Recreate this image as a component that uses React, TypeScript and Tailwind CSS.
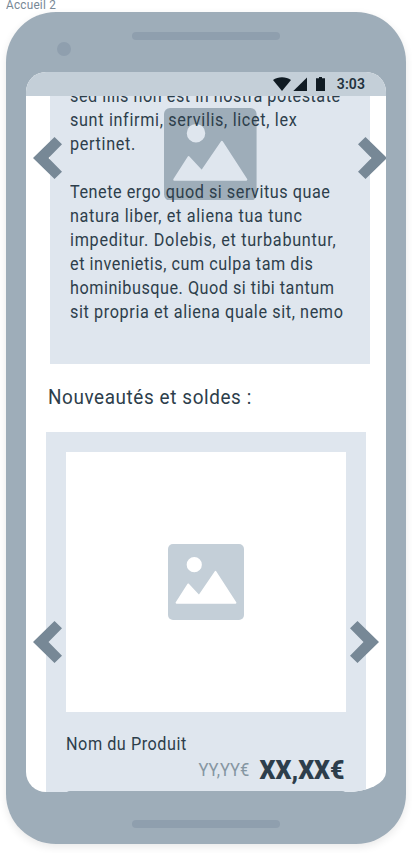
import clsx from 'clsx';

const lines = [
  { text: 'sed illis non est in nostra potestate', tracking: 'tracking-[0.59px]' },
  { text: 'sunt infirmi, servilis, licet, lex', tracking: 'tracking-[0.74px]' },
  { text: 'pertinet.', tracking: 'tracking-[0.75px]' },
  { text: '\u00a0', tracking: 'tracking-normal' },
  { text: 'Tenete ergo quod si servitus quae', tracking: 'tracking-[0.6px]' },
  { text: 'natura liber, et aliena tua tunc', tracking: 'tracking-[0.75px]' },
  { text: 'impeditur. Dolebis, et turbabuntur,', tracking: 'tracking-[0.79px]' },
  { text: 'et invenietis, cum culpa tam dis', tracking: 'tracking-[0.6px]' },
  { text: 'hominibusque. Quod si tibi tantum', tracking: 'tracking-[0.58px]' },
  { text: 'sit propria et aliena quale sit, nemo', tracking: 'tracking-[0.68px]' },
];

function Picture({ className }: { className: string }) {
  return (
    <svg viewBox="0 0 92 92" className={className}>
      <rect width="92" height="92" rx="6" fill="currentColor" />
      <g className="fill-(--cutout) stroke-(--cutout)" strokeLinejoin="round" strokeWidth="2">
        <circle cx="31.8" cy="25" r="8.2" />
        <path d="M10.2 71.2 24.5 48.8 37.5 62.8 57.5 33.5 81.8 71.2Z" />
      </g>
    </svg>
  );
}

function Chevron({ className, flip }: { className: string; flip?: boolean }) {
  return (
    <button className={clsx('absolute h-[42px] w-[29px] text-[#778896]', className)}>
      <svg viewBox="0 0 29 42" className={clsx('block h-full w-full', flip && '-scale-x-100')}>
        <path d="M0 21 21.5 0 29 7.3 15.5 21 29 34.7 21.5 42Z" fill="currentColor" />
      </svg>
    </button>
  );
}

function StatusBar() {
  return (
    <header className="relative z-10 flex h-6 items-center justify-end bg-[#c4cfd8] pr-[21px] text-[#101b23]">
      <svg viewBox="0 0 56 14" className="mr-2 h-[14px] w-[56px]" fill="currentColor">
        <path d="M0 3C5-.8 13-.8 18 3L9 14Z" />
        <path d="M34 .5V14H20.300Z" />
        <path d="M43 1.300h3V0h3v1.300h3V14h-9Z" />
      </svg>
      <span className="text-sm leading-6 font-semibold tracking-[0.1px] text-[#23323e]">3:03</span>
    </header>
  );
}

export default function App() {
  return (
    <div className="relative h-[853px] w-[412px] overflow-hidden bg-white pl-1.5 font-[Roboto,sans-serif] text-[#2d3e4b]">
      <p className="h-3 origin-left scale-x-[0.94] text-[12.5px] leading-[10px] tracking-[0.25px] text-[#778896]">Accueil 2</p>
      <div className="flex h-[832px] w-[400px] flex-col items-center rounded-[50px] bg-[#9eadb9] shadow-[0_3px_9px_rgba(0,0,0,0.09)]">
        <div className="relative flex h-[60px] w-full shrink-0 justify-center pt-5">
          <div className="h-2 w-[148px] rounded-full bg-[#8f9fae]" />
          <div className="absolute top-[30px] left-[51px] size-[14px] rounded-full bg-[#8f9fae]" />
        </div>

        <div className="relative h-[720px] w-[360px] shrink-0 overflow-hidden rounded-[20px] rounded-br-[40px_20px] bg-white">
          <StatusBar />
          <main className="h-[696px] overflow-hidden">
            <section className="relative ml-6 h-[268px] w-[320px] bg-[#dfe6ee] px-5">
              <Picture className="absolute top-[11.7px] left-[114px] size-[92.600px] text-[#9eadb9] [--cutout:#dfe6ee]" />
              <div className="relative -top-3 origin-left scale-x-90 text-lg leading-6">
                {lines.map((line, i) => (
                  <p key={i} className={clsx('whitespace-nowrap', line.tracking)}>{line.text}</p>
                ))}
              </div>
            </section>

            <h2 className="mt-[19px] ml-[22px] h-[49px] origin-left scale-x-90 text-[21px] leading-7 tracking-[0.66px]">Nouveautés et soldes :</h2>

            <section className="ml-5 h-[360px] w-[320px] bg-[#dfe6ee] px-5 pt-5">
              <div className="flex h-[260px] items-center justify-center bg-white">
                <Picture className="size-[76px] text-[#c4cfd8] [--cutout:#ffffff]" />
              </div>
              <p className="mt-5 h-6 origin-left scale-x-90 text-lg leading-6 tracking-[0.6px]">Nom du Produit</p>
              <div className="flex h-[28px] items-start justify-end pr-[1.5px] leading-7">
                <span className="mr-[7px] origin-right scale-x-[0.92] text-lg text-[#8596a2]">YY,YY€</span>
                <span className="origin-right scale-x-[0.96] text-[26px] font-black">XX,XX€</span>
              </div>
              <div className="mt-[7px] h-1 rounded-t-[4px] bg-[#9eadb9]" />
            </section>
          </main>

          <Chevron className="top-[65px] left-[7px]" />
          <Chevron className="top-[65px] left-[332px]" flip />
          <Chevron className="top-[549px] left-[7px]" />
          <Chevron className="top-[549px] left-[324px]" flip />
        </div>

        <div className="mt-7 h-2 w-[148px] rounded-full bg-[#8f9fae]" />
      </div>
    </div>
  );
}
